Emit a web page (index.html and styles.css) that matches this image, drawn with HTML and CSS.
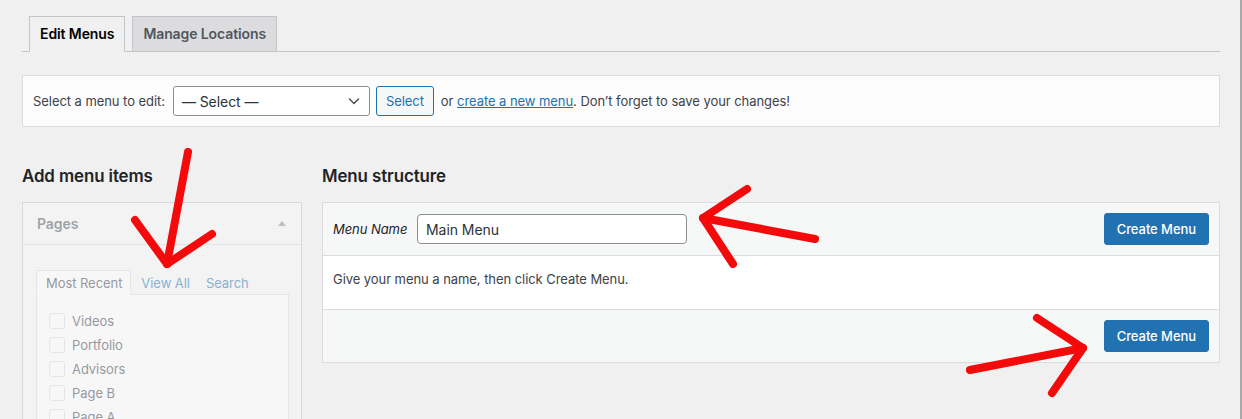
FILE: index.html
```html
<!DOCTYPE html>
<html lang="en">
<head>
  <meta charset="UTF-8">
  <title>Menus</title>
  <link rel="stylesheet" href="styles.css">
</head>
<body>
  <div class="wrap">
    <nav class="nav-tabs">
      <a class="nav-tab active">Edit Menus</a>
      <a class="nav-tab">Manage Locations</a>
    </nav>

    <div class="manage-menus">
      <span class="manage-label">Select a menu to edit:</span>
      <div class="fake-select">
        <span>— Select —</span>
        <svg width="14" height="14" viewBox="0 0 14 14"><path d="M2.5 5l4.5 4.5L11.5 5" fill="none" stroke="#50575e" stroke-width="1.6" stroke-linecap="round" stroke-linejoin="round"/></svg>
      </div>
      <button class="btn-secondary">Select</button>
      <span class="manage-text">or <a class="link">create a new menu</a>. Don’t forget to save your changes!</span>
    </div>

    <div class="columns">
      <div class="col-left">
        <h3 class="col-title">Add menu items</h3>
        <div class="disabled">
          <div class="metabox">
            <div class="metabox-head">
              <span>Pages</span>
              <span class="caret"></span>
            </div>
            <div class="metabox-body">
              <ul class="inner-tabs">
                <li class="inner-tab active">Most Recent</li>
                <li class="inner-tab">View All</li>
                <li class="inner-tab">Search</li>
              </ul>
              <div class="tab-panel">
                <label class="check-row"><span class="checkbox"></span>Videos</label>
                <label class="check-row"><span class="checkbox"></span>Portfolio</label>
                <label class="check-row"><span class="checkbox"></span>Advisors</label>
                <label class="check-row"><span class="checkbox"></span>Page B</label>
                <label class="check-row"><span class="checkbox"></span>Page A</label>
                <label class="check-row"><span class="checkbox"></span>Home</label>
              </div>
            </div>
          </div>
        </div>
      </div>

      <div class="col-right">
        <h3 class="col-title">Menu structure</h3>
        <div class="menu-box">
          <div class="menu-head">
            <div class="name-field">
              <label class="name-label">Menu Name</label>
              <input class="name-input" type="text" value="Main Menu">
            </div>
            <button class="btn-primary">Create Menu</button>
          </div>
          <div class="menu-body">Give your menu a name, then click Create Menu.</div>
          <div class="menu-foot">
            <button class="btn-primary">Create Menu</button>
          </div>
        </div>
      </div>
    </div>
  </div>

  <!-- hand drawn annotation arrows -->
  <svg class="arrows" width="1242" height="419" viewBox="0 0 1242 419">
    <g fill="none" stroke="#f40a0a" stroke-width="8" stroke-linecap="round" stroke-linejoin="round">
      <path d="M188 152 L167 264"/>
      <path d="M135 220 L167 264 L212 234"/>
      <path d="M815 239 L703 218"/>
      <path d="M747 189 L703 218 L733 264"/>
      <path d="M970 370 L1083 348"/>
      <path d="M1037 318 L1083 348 L1052 393"/>
    </g>
  </svg>
</body>
</html>
```

FILE: styles.css
```css
* {
  margin: 0;
  padding: 0;
  box-sizing: border-box;
}

html {
  border-right: 2px solid #a9a9a9;
  background: #f0f0f1;
}

body {
  font-family: Inter, "Noto Sans", sans-serif;
  font-size: 13px;
  letter-spacing: -0.06px;
  color: #3c434a;
  background: #f0f0f1;
  height: 419px;
  overflow: hidden;
  position: relative;
}

.wrap {
  padding: 16px 20px 0 22px;
}

/* top tabs */
.nav-tabs {
  display: flex;
  gap: 7px;
  padding-left: 7px;
  border-bottom: 1px solid #c3c4c7;
}

.nav-tab {
  display: block;
  padding: 5px 10px;
  font-size: 14px;
  line-height: 24px;
  font-weight: 600;
  letter-spacing: -0.1px;
  color: #50575e;
  background: #dcdcde;
  border: 1px solid #c3c4c7;
  margin-bottom: -1px;
}

.nav-tab.active {
  color: #000;
  background: #f0f0f1;
  border-bottom-color: #f0f0f1;
}

/* select a menu bar */
.manage-menus {
  margin-top: 23px;
  display: flex;
  align-items: center;
  padding: 10px;
  background: #fcfcfc;
  border: 1px solid #dcdcde;
}

.manage-label {
  margin-right: 8px;
}

.fake-select {
  width: 197px;
  height: 30px;
  display: flex;
  align-items: center;
  justify-content: space-between;
  padding: 0 8px 0 8px;
  font-size: 14px;
  color: #2c3338;
  background: #fff;
  border: 1px solid #8c8f94;
  border-radius: 3px;
}

.btn-secondary {
  margin-left: 6px;
  height: 30px;
  padding: 0 9px;
  font-family: inherit;
  font-size: 13px;
  letter-spacing: -0.06px;
  color: #2271b1;
  background: #f6f7f7;
  border: 1px solid #2271b1;
  border-radius: 3px;
}

.manage-text {
  margin-left: 7px;
}

.link {
  color: #2271b1;
  text-decoration: underline;
}

/* columns */
.columns {
  display: flex;
  gap: 20px;
}

.col-left {
  width: 280px;
  flex-shrink: 0;
}

.col-right {
  flex: 1;
}

.col-title {
  font-size: 16.9px;
  line-height: 22px;
  font-weight: 600;
  letter-spacing: -0.1px;
  color: #1d2327;
  margin: 38px 0 15px;
}

.disabled {
  opacity: 0.5;
}

.metabox {
  border: 1px solid #c3c4c7;
  background: #fff;
}

.metabox-head {
  height: 42px;
  display: flex;
  align-items: center;
  justify-content: space-between;
  padding: 0 14px;
  font-size: 14px;
  font-weight: 600;
  color: #50575e;
  background: #f6f7f7;
  border-bottom: 1px solid #dcdcde;
}

.caret {
  width: 0;
  height: 0;
  border-left: 4px solid transparent;
  border-right: 4px solid transparent;
  border-bottom: 5px solid #8c8f94;
  margin-right: 1px;
}

.metabox-body {
  padding: 25px 12px 0 13px;
  background: #f6f7f7;
}

.inner-tabs {
  list-style: none;
  display: flex;
}

.inner-tab {
  height: 25px;
  padding: 0 7px;
  line-height: 24px;
  color: #2271b1;
  border: 1px solid transparent;
  margin-bottom: -1px;
}

.inner-tab.active {
  color: #3c434a;
  background: #fff;
  border-color: #dcdcde;
  border-bottom-color: #fff;
  padding: 0 8px 0 9px;
  margin-right: 2px;
}

.tab-panel {
  background: #fff;
  border: 1px solid #dcdcde;
  padding: 14px 12px 20px;
}

.check-row {
  display: flex;
  align-items: center;
  height: 24px;
  color: #3c434a;
}

.checkbox {
  width: 16px;
  height: 16px;
  margin-right: 7px;
  border: 1px solid #dcdcde;
  border-radius: 3px;
  background: #fff;
}

/* menu structure */
.menu-box {
  border: 1px solid #dcdcde;
  background: #fff;
}

.menu-head,
.menu-foot {
  display: flex;
  align-items: center;
  justify-content: space-between;
  padding: 10px;
  background: #f6f7f7;
}

.menu-head {
  border-bottom: 1px solid #dcdcde;
}

.menu-foot {
  justify-content: flex-end;
  border-top: 1px solid #dcdcde;
}

.name-field {
  display: flex;
  align-items: center;
}

.name-label {
  font-style: italic;
  color: #1d2327;
  width: 84px;
}

.name-input {
  width: 270px;
  height: 30px;
  padding: 0 8px;
  font-family: inherit;
  font-size: 14px;
  letter-spacing: -0.06px;
  color: #2c3338;
  background: #fff;
  border: 1px solid #8c8f94;
  border-radius: 4px;
}

.menu-body {
  padding: 13px 10px 20px;
  line-height: 20px;
  background: #fff;
}

.btn-primary {
  height: 32px;
  padding: 0 12px;
  font-family: inherit;
  font-size: 13px;
  font-weight: 500;
  letter-spacing: -0.06px;
  color: #fff;
  background: #2271b1;
  border: 1px solid #2271b1;
  border-radius: 3px;
}

.arrows {
  position: absolute;
  top: 0;
  left: 0;
  pointer-events: none;
}
```
